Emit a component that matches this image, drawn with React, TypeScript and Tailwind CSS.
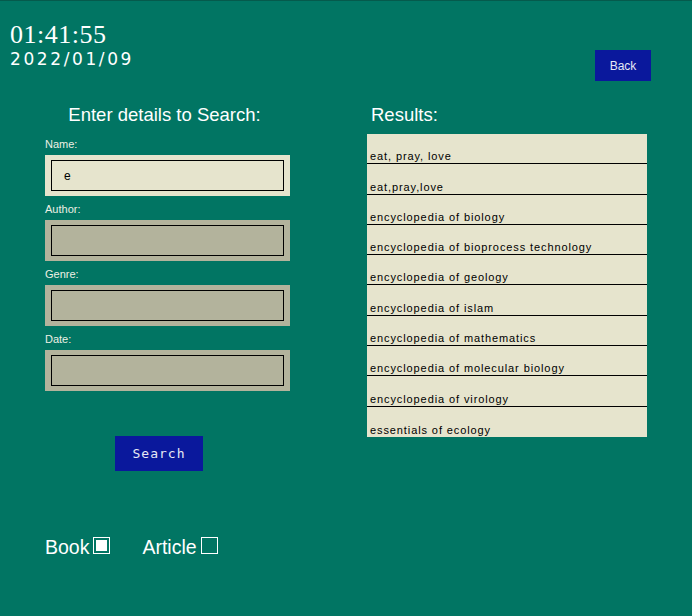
import React from 'react';

const results = [
  'eat, pray, love',
  'eat,pray,love',
  'encyclopedia of biology',
  'encyclopedia of bioprocess technology',
  'encyclopedia of geology',
  'encyclopedia of islam',
  'encyclopedia of mathematics',
  'encyclopedia of molecular biology',
  'encyclopedia of virology',
  'essentials of ecology',
];

const fields = [
  { label: 'Name:', value: 'e', active: true },
  { label: 'Author:', value: '', active: false },
  { label: 'Genre:', value: '', active: false },
  { label: 'Date:', value: '', active: false },
];

function Field({ label, value, active }: { label: string; value: string; active: boolean }) {
  return (
    <div className="flex flex-col">
      <div className="h-[19px] text-[11px] leading-[14px] pt-[1px] text-[#eef0e4]">{label}</div>
      <div className={`h-[41px] w-[245px] px-[6px] py-[5px] ${active ? 'bg-[#e6e4cd]' : 'bg-[#b3b39c]'}`}>
        <div className="h-full w-full border border-black flex items-center pl-[12px] text-[12px] text-black">
          {value}
        </div>
      </div>
    </div>
  );
}

function Check({ checked, label }: { checked: boolean; label: string }) {
  return (
    <div className="flex items-end">
      <span className="text-[19.5px] leading-[20px]">{label}</span>
      <span className="ml-[4px] mb-[3px] w-[17px] h-[17px] border border-white p-[2px] flex">
        {checked && <span className="flex-1 bg-white" />}
      </span>
    </div>
  );
}

export default function App() {
  return (
    <div
      className="w-[692px] h-[616px] bg-[#017563] text-white overflow-hidden border-t border-[#055a4c]"
      style={{ fontFamily: '"Liberation Sans", Arial, sans-serif' }}
    >
      <div className="flex justify-between pl-[10px] pt-[21px] pr-[41px]">
        <div className="flex flex-col">
          <div className="text-[26px] leading-[26px] tracking-[0.5px]" style={{ fontFamily: '"Liberation Serif", serif' }}>
            01:41:55
          </div>
          <div className="mt-[2px] text-[17px] leading-[18px] tracking-[2.6px]" style={{ fontFamily: '"DejaVu Sans", sans-serif' }}>
            2022/01/09
          </div>
        </div>
        <button className="mt-[28px] w-[56px] h-[31px] bg-[#0a189c] text-[12px] text-[#e6e8f4]">Back</button>
      </div>

      <div className="flex pl-[45px] mt-[23px]">
        <div className="flex flex-col w-[245px]">
          <div className="text-[18.5px] leading-[22px] text-center pr-[6px]">Enter details to Search:</div>
          <div className="flex flex-col gap-[5px] mt-[10px]">
            {fields.map((f) => (
              <Field key={f.label} {...f} />
            ))}
          </div>
          <button
            className="ml-[70px] mt-[45px] w-[88px] h-[35px] bg-[#0a189c] text-[13px] tracking-[1px] text-[#e6e8f4]"
            style={{ fontFamily: '"DejaVu Sans Mono", monospace' }}
          >
            Search
          </button>
          <div className="flex gap-[32px] mt-[66px]">
            <Check checked label="Book" />
            <Check checked={false} label="Article" />
          </div>
        </div>

        <div className="ml-[77px] flex flex-col w-[280px]">
          <div className="text-[18.5px] leading-[22px] pl-[4px]">Results:</div>
          <div className="mt-[8px] bg-[#e6e4cd] flex flex-col">
            {results.map((r, i) => (
              <div
                key={r}
                className={`h-[30.3px] flex items-end pl-[3px] text-[11px] leading-[13px] tracking-[0.9px] text-black ${
                  i < results.length - 1 ? 'border-b border-black' : ''
                }`}
              >
                {r}
              </div>
            ))}
          </div>
        </div>
      </div>
    </div>
  );
}
